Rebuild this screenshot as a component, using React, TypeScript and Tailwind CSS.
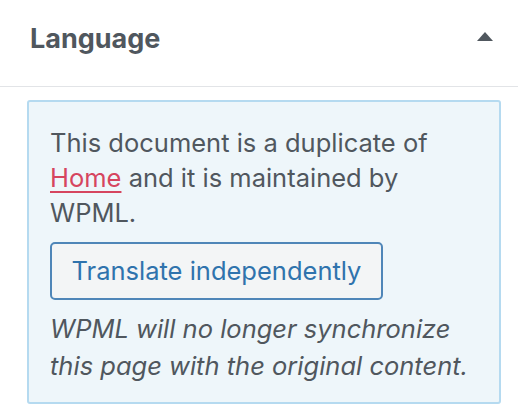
const App: React.FC = () => {
  return (
    <div className="w-[518px] h-[418px] bg-white font-['Inter',sans-serif] overflow-hidden">
      {/* Panel header */}
      <div className="flex items-center justify-between h-[87px] pb-[8px] pl-[30px] pr-[25px] border-b border-[#e2e4e7]">
        <h2 className="text-[27px] font-bold text-[#50575e]">Language</h2>
        <svg width="16" height="10" viewBox="0 0 16 10" className="mb-[4px]">
          <polygon points="8,0 16,9 0,9" fill="#50575e" />
        </svg>
      </div>
      {/* Notice box */}
      <div className="ml-[27px] mt-[13px] w-[474px] rounded-[3px] border-2 border-[#b5daf0] bg-[#eef6fa] px-[21px] pt-[23px] pb-[18px] text-[#50575e]">
        <p className="text-[25.5px] leading-[35px]">
          This document is a duplicate of{" "}
          <a href="#" className="text-[#d6455f] underline underline-offset-[4px]">
            Home
          </a>{" "}
          and it is maintained by WPML.
        </p>
        <button className="mt-[12px] h-[58px] w-[333px] rounded-[5px] border-2 border-[#4f86b8] bg-[#f3f5f6] text-[25.5px] text-[#2f73ad]">
          Translate independently
        </button>
        <p className="mt-[10px] text-[25.5px] italic leading-[37px]">
          WPML will no longer synchronize this page with the original content.
        </p>
      </div>
    </div>
  );
};

export default App;
